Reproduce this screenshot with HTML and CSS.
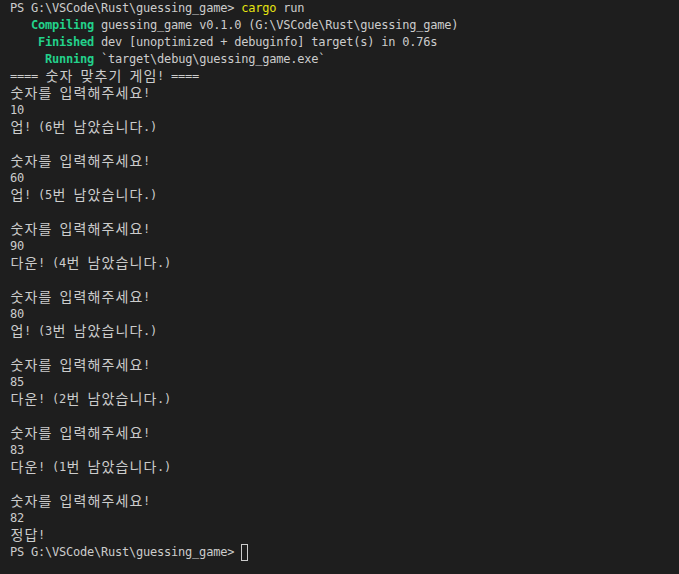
FILE: index.html
```html
<!DOCTYPE html>
<html lang="ko">
<head>
<meta charset="utf-8">
<title>Terminal</title>
<link rel="stylesheet" href="styles.css">
</head>
<body>
<div class="term">
<div class="ln">PS G:\VSCode\Rust\guessing_game&gt; <span class="cmd">cargo</span> run</div>
<div class="ln">   <span class="ok">Compiling</span> guessing_game v0.1.0 (G:\VSCode\Rust\guessing_game)</div>
<div class="ln">    <span class="ok">Finished</span> dev [unoptimized + debuginfo] target(s) in 0.76s</div>
<div class="ln">     <span class="ok">Running</span> `target\debug\guessing_game.exe`</div>
<div class="ln">==== <span class="h">숫</span><span class="h">자</span> <span class="h">맞</span><span class="h">추</span><span class="h">기</span> <span class="h">게</span><span class="h">임</span>! ====</div>
<div class="ln"><span class="h">숫</span><span class="h">자</span><span class="h">를</span> <span class="h">입</span><span class="h">력</span><span class="h">해</span><span class="h">주</span><span class="h">세</span><span class="h">요</span>!</div>
<div class="ln">10</div>
<div class="ln"><span class="h">업</span>! (6<span class="h">번</span> <span class="h">남</span><span class="h">았</span><span class="h">습</span><span class="h">니</span><span class="h">다</span>.)</div>
<div class="ln"></div>
<div class="ln"><span class="h">숫</span><span class="h">자</span><span class="h">를</span> <span class="h">입</span><span class="h">력</span><span class="h">해</span><span class="h">주</span><span class="h">세</span><span class="h">요</span>!</div>
<div class="ln">60</div>
<div class="ln"><span class="h">업</span>! (5<span class="h">번</span> <span class="h">남</span><span class="h">았</span><span class="h">습</span><span class="h">니</span><span class="h">다</span>.)</div>
<div class="ln"></div>
<div class="ln"><span class="h">숫</span><span class="h">자</span><span class="h">를</span> <span class="h">입</span><span class="h">력</span><span class="h">해</span><span class="h">주</span><span class="h">세</span><span class="h">요</span>!</div>
<div class="ln">90</div>
<div class="ln"><span class="h">다</span><span class="h">운</span>! (4<span class="h">번</span> <span class="h">남</span><span class="h">았</span><span class="h">습</span><span class="h">니</span><span class="h">다</span>.)</div>
<div class="ln"></div>
<div class="ln"><span class="h">숫</span><span class="h">자</span><span class="h">를</span> <span class="h">입</span><span class="h">력</span><span class="h">해</span><span class="h">주</span><span class="h">세</span><span class="h">요</span>!</div>
<div class="ln">80</div>
<div class="ln"><span class="h">업</span>! (3<span class="h">번</span> <span class="h">남</span><span class="h">았</span><span class="h">습</span><span class="h">니</span><span class="h">다</span>.)</div>
<div class="ln"></div>
<div class="ln"><span class="h">숫</span><span class="h">자</span><span class="h">를</span> <span class="h">입</span><span class="h">력</span><span class="h">해</span><span class="h">주</span><span class="h">세</span><span class="h">요</span>!</div>
<div class="ln">85</div>
<div class="ln"><span class="h">다</span><span class="h">운</span>! (2<span class="h">번</span> <span class="h">남</span><span class="h">았</span><span class="h">습</span><span class="h">니</span><span class="h">다</span>.)</div>
<div class="ln"></div>
<div class="ln"><span class="h">숫</span><span class="h">자</span><span class="h">를</span> <span class="h">입</span><span class="h">력</span><span class="h">해</span><span class="h">주</span><span class="h">세</span><span class="h">요</span>!</div>
<div class="ln">83</div>
<div class="ln"><span class="h">다</span><span class="h">운</span>! (1<span class="h">번</span> <span class="h">남</span><span class="h">았</span><span class="h">습</span><span class="h">니</span><span class="h">다</span>.)</div>
<div class="ln"></div>
<div class="ln"><span class="h">숫</span><span class="h">자</span><span class="h">를</span> <span class="h">입</span><span class="h">력</span><span class="h">해</span><span class="h">주</span><span class="h">세</span><span class="h">요</span>!</div>
<div class="ln">82</div>
<div class="ln"><span class="h">정</span><span class="h">답</span>!</div>
<div class="ln">PS G:\VSCode\Rust\guessing_game&gt; <span class="cursor"> </span></div>
</div>
</body>
</html>
```
FILE: styles.css
```css
html, body {
  margin: 0;
  padding: 0;
  background: #1e1e1e;
  height: 100%;
}
.term {
  padding: 0 0 0 10px;
  color: #cccccc;
  font-family: "DejaVu Sans Mono", "Liberation Mono", monospace;
  font-size: 12px;
  letter-spacing: -0.22px;
}
.ln {
  height: 17px;
  line-height: 17px;
  white-space: pre;
}
.cmd {
  color: #e5e510;
}
.ok {
  color: #23d18b;
  font-weight: bold;
}
.h {
  display: inline-block;
  width: 14px;
  height: 17px;
  line-height: 15px;
  vertical-align: top;
  text-align: center;
  font-family: "Noto Sans CJK KR", sans-serif;
  font-size: 14px;
  letter-spacing: 0;
}
.cursor {
  display: inline-block;
  box-sizing: border-box;
  width: 7px;
  height: 17px;
  border: 1px solid #cccccc;
  vertical-align: top;
  letter-spacing: 0;
}
```
